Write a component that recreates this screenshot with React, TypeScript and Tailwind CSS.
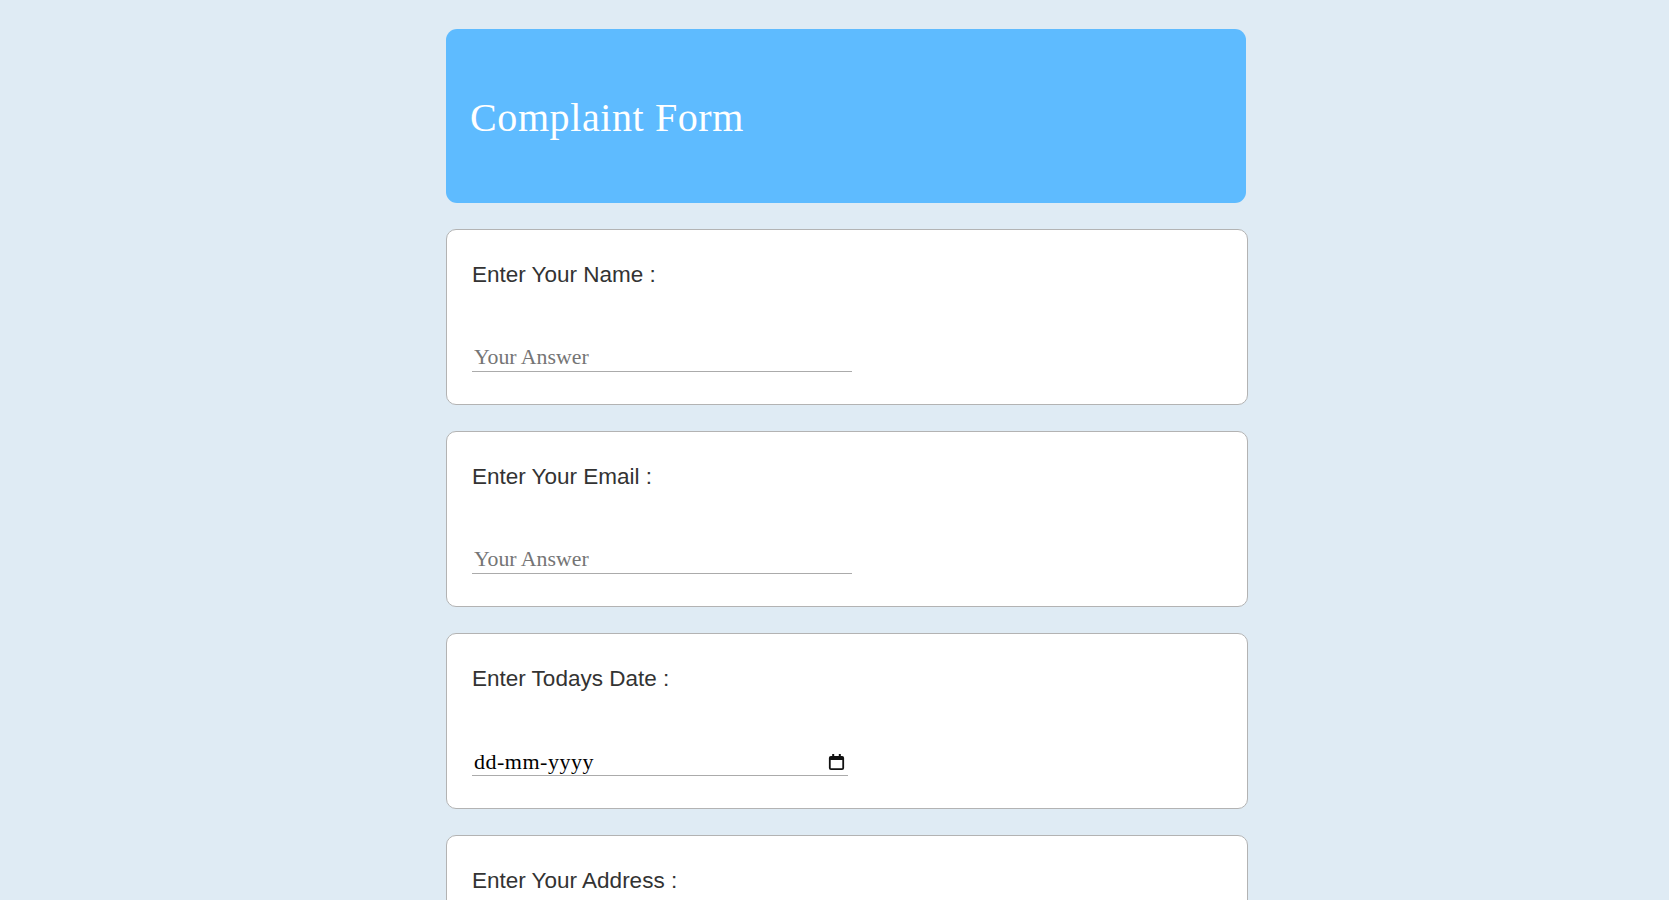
import React from "react";

function CalendarIcon() {
  return (
    <svg width="17" height="18" viewBox="0 0 17 18" fill="none">
      <rect x="1.8" y="3.8" width="13.4" height="12.4" rx="1.2" stroke="#111" strokeWidth="1.8" />
      <rect x="1.8" y="3.8" width="13.4" height="3.2" fill="#111" />
      <rect x="4.2" y="1" width="2" height="3.2" fill="#111" />
      <rect x="10.8" y="1" width="2" height="3.2" fill="#111" />
    </svg>
  );
}

function Card({ label, children }: { label: string; children: React.ReactNode }) {
  return (
    <div className="w-[802px] rounded-[10px] border border-[#b3b3b3] bg-white px-[25px] py-[32px]">
      <div
        className="h-[25px] text-[22.5px] leading-[25px] text-[#333333]"
        style={{ fontFamily: '"Liberation Sans", Arial, sans-serif' }}
      >
        {label}
      </div>
      <div className="mt-[60px]">{children}</div>
    </div>
  );
}

function TextAnswer() {
  return (
    <input
      type="text"
      placeholder="Your Answer"
      className="block h-[25px] w-[380px] border-0 border-b border-[#ababab] bg-transparent px-[2px] pb-[3px] text-[21.8px] leading-[21px] text-black outline-none placeholder:text-[#757575]"
      style={{ fontFamily: '"Liberation Serif", "Times New Roman", serif' }}
    />
  );
}

function DateAnswer() {
  return (
    <div className="flex h-[25px] w-[376px] items-center justify-between border-b border-[#ababab] pb-[3px] pl-[2px] pr-[3px]">
      <span
        className="text-[22px] leading-[21px] tracking-[0.5px] text-black"
        style={{ fontFamily: '"Liberation Serif", "Times New Roman", serif' }}
      >
        dd-mm-yyyy
      </span>
      <CalendarIcon />
    </div>
  );
}

export default function App() {
  return (
    <div className="min-h-screen w-full bg-[#dfebf4]">
      <div className="ml-[446px] flex w-[802px] flex-col gap-[26px] pt-[29px] pb-[40px]">
        <div className="flex h-[174px] w-[800px] items-center rounded-[11px] bg-[#5ebbff] pl-[24px] pt-[4px]">
          <h1
            className="text-[40px] leading-none tracking-[0.6px] text-white"
            style={{ fontFamily: '"Liberation Serif", Georgia, serif' }}
          >
            Complaint Form
          </h1>
        </div>
        <Card label="Enter Your Name :">
          <TextAnswer />
        </Card>
        <Card label="Enter Your Email :">
          <TextAnswer />
        </Card>
        <Card label="Enter Todays Date :">
          <DateAnswer />
        </Card>
        <Card label="Enter Your Address :">
          <TextAnswer />
        </Card>
      </div>
    </div>
  );
}
